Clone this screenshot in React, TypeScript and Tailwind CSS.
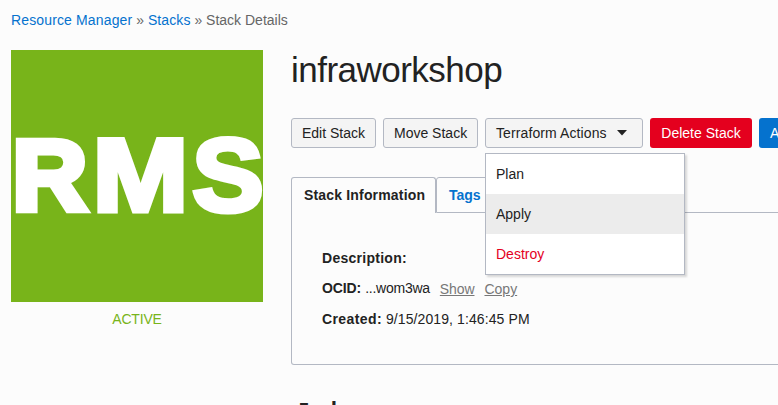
import React from "react";

const font = "font-['Liberation_Sans',Arial,sans-serif]";
const button =
  "h-[30px] shrink-0 rounded-[3px] border border-[#b3b8c3] bg-[#f4f4f4] px-[10px] text-left leading-[28px] whitespace-nowrap";

function StackLogo() {
  return (
    <svg
      className="block h-[252px] w-[252px] bg-[#78b41a]"
      viewBox="0 0 252 252"
      fill="white"
      stroke="white"
      strokeWidth="5"
      fontFamily="Liberation Sans, Arial, sans-serif"
      fontWeight="700"
      fontSize="103"
    >
      <text fontSize="101" strokeWidth="6.5" transform="translate(1.2 159.9) scale(1.03 1)">R</text>
      <text transform="translate(81.6 160.8) scale(1.118 1)">M</text>
      <text transform="translate(181.2 160.8) scale(1.04 1)">S</text>
    </svg>
  );
}

function ActionsMenu() {
  return (
    <div className="absolute top-[35px] left-0 z-10 w-[200px] border border-[#b3b8c3] bg-white shadow-[2px_2px_2px_rgba(0,0,0,0.15)]">
      <div className="h-10 px-[10px] leading-[40px]">Plan</div>
      <div className="h-10 bg-[#ececec] px-[10px] leading-[40px]">Apply</div>
      <div className="h-10 px-[10px] leading-[40px] text-[#e4001e]">Destroy</div>
    </div>
  );
}

export default function App() {
  return (
    <div className={`h-[405px] w-[778px] overflow-hidden bg-[#fcfcfc] pt-[10px] pl-[11px] text-[14px] text-[#222] ${font}`}>
      <nav className="h-5 leading-[20px] whitespace-nowrap text-[#666]">
        <a className="tracking-[0.14px] text-[#0572ce]">Resource Manager</a> » <a className="tracking-[0.1px] text-[#0572ce]">Stacks</a> » Stack Details
      </nav>
      <div className="mt-5 flex">
        <aside className="w-[252px] shrink-0">
          <StackLogo />
          <div className="mt-[7px] text-center leading-[20px] tracking-[-0.2px] text-[#78b41a]">ACTIVE</div>
        </aside>
        <main className="ml-7 w-[560px] shrink-0">
          <h1 className="h-[68px] text-[35px] leading-[40px] tracking-[-0.52px]">infraworkshop</h1>
          <div className="flex gap-[7px]">
            <button className={`${button} w-[85px]`}>Edit Stack</button>
            <button className={`${button} w-[95px]`}>Move Stack</button>
            <div className="relative w-[158px] shrink-0">
              <button className={`${button} flex w-full items-center tracking-[0.1px]`}>
                Terraform Actions
                <svg className="ml-[10px] h-[6px] w-[10px]" viewBox="0 0 10 6">
                  <path d="M0 0h10L5 5.5z" fill="#222" />
                </svg>
              </button>
              <ActionsMenu />
            </div>
            <button className="h-[30px] w-[102px] shrink-0 rounded-[3px] bg-[#e4001e] text-center text-white">Delete Stack</button>
            <button className="h-[30px] w-[90px] shrink-0 rounded-[3px] bg-[#0572ce] pl-[11px] text-left whitespace-nowrap text-white">Apply Tags</button>
          </div>
          <div className="mt-[29px] flex h-9 font-bold">
            <div className="w-[145px] rounded-t-[3px] border border-b-0 border-[#b3b8c3] pl-[12px] leading-[34px] tracking-[0.17px] whitespace-nowrap">Stack Information</div>
            <div className="w-[58px] rounded-tl-[3px] border border-[#b3b8c3] pl-3 leading-[34px] text-[#0572ce]">Tags</div>
            <div className="flex-1 border-b border-[#b3b8c3]" />
          </div>
          <section className="h-[152px] rounded-b-[3px] border border-t-0 border-[#b3b8c3] pt-[35px] pl-[30px] leading-[20px]">
            <div className="h-[30px]"><b className="tracking-[0.27px]">Description:</b></div>
            <div className="flex h-[31px]">
              <b className="tracking-[-0.1px]">OCID:</b>
              <span className="ml-1 tracking-[-0.25px]">...wom3wa</span>
              <a className="mt-px ml-[10px] tracking-[-0.1px] text-[#777] underline">Show</a>
              <a className="mt-px ml-[10px] text-[#777] underline">Copy</a>
            </div>
            <div><b className="tracking-[0.4px]">Created:</b> <span className="tracking-[0.1px]">9/15/2019, 1:46:45 PM</span></div>
          </section>
          <h2 className="mt-[30px] pl-[2px] text-[35px] leading-[40px]">Jobs</h2>
        </main>
      </div>
    </div>
  );
}
